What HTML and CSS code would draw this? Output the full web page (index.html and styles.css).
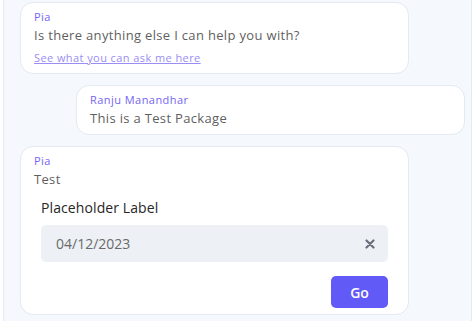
FILE: index.html
```html
<!DOCTYPE html>
<html lang="en">
<head>
<meta charset="utf-8">
<title>Chat</title>
<link rel="stylesheet" href="styles.css">
</head>
<body>
<div class="pane">
  <div class="bubble bot">
    <div class="sender">Pia</div>
    <div class="msg">Is there anything else I can help you with?</div>
    <a class="link" href="#">See what you can ask me here</a>
  </div>
  <div class="bubble user">
    <div class="sender">Ranju Manandhar</div>
    <div class="msg">This is a Test Package</div>
  </div>
  <div class="bubble bot form-bubble">
    <div class="sender">Pia</div>
    <div class="msg">Test</div>
    <div class="form">
      <div class="label">Placeholder Label</div>
      <div class="field">
        <span class="value">04/12/2023</span>
        <svg class="clear" width="10" height="10" viewBox="0 0 10 10"><path d="M1.5 1.5 L8.5 8.5 M8.5 1.5 L1.5 8.5" stroke="#6c6f7d" stroke-width="2.2" stroke-linecap="round"/></svg>
      </div>
      <div class="actions"><button class="go">Go</button></div>
    </div>
  </div>
</div>
</body>
</html>
```
FILE: styles.css
```css
html, body {
  margin: 0;
  padding: 0;
  background: #ffffff;
}
body {
  font-family: "Open Sans", "Noto Sans", sans-serif;
  width: 474px;
  height: 321px;
  overflow: hidden;
}
.pane {
  margin-left: 3px;
  width: 467px;
  height: 321px;
  background: #f5f8fc;
  border-left: 1px solid #e4eaf2;
  border-right: 1px solid #e4eaf2;
  display: flex;
  flex-direction: column;
  gap: 11px;
  padding-top: 2px;
  box-sizing: content-box;
}
.bubble {
  background: #ffffff;
  border: 1px solid #e3eaf3;
  border-radius: 13px;
  padding: 6px 13px 6px;
  box-sizing: border-box;
  width: 389px;
}
.bot {
  margin-left: 16px;
}
.user {
  margin-left: 72px;
}
.sender {
  font-size: 11px;
  line-height: 16px;
  color: #7565f3;
  font-weight: 500;
  letter-spacing: 0.45px;
}
.msg {
  font-size: 13px;
  line-height: 20px;
  color: #5f5f5f;
  letter-spacing: 0.33px;
}
.link {
  display: block;
  margin-top: 5px;
  margin-bottom: 1px;
  font-size: 11px;
  line-height: 16px;
  color: #9a8ef4;
  text-decoration: underline;
  letter-spacing: 0.42px;
}
.form {
  padding: 9px 7px 0;
}
.label {
  font-size: 14px;
  line-height: 20px;
  font-weight: 500;
  color: #262626;
  letter-spacing: 0.1px;
}
.field {
  margin-top: 7px;
  height: 37px;
  background: #edf1f5;
  border-radius: 5px;
  display: flex;
  align-items: center;
  justify-content: space-between;
  padding: 0 13px 0 15px;
}
.value {
  font-size: 14px;
  color: #6a6a6a;
}
.clear {
  display: block;
}
.actions {
  display: flex;
  justify-content: flex-end;
  margin-top: 14px;
}
.go {
  width: 57px;
  height: 32px;
  border: none;
  border-radius: 5px;
  background: #625af6;
  color: #ffffff;
  font-family: inherit;
  font-size: 14px;
  font-weight: 600;
}
```
